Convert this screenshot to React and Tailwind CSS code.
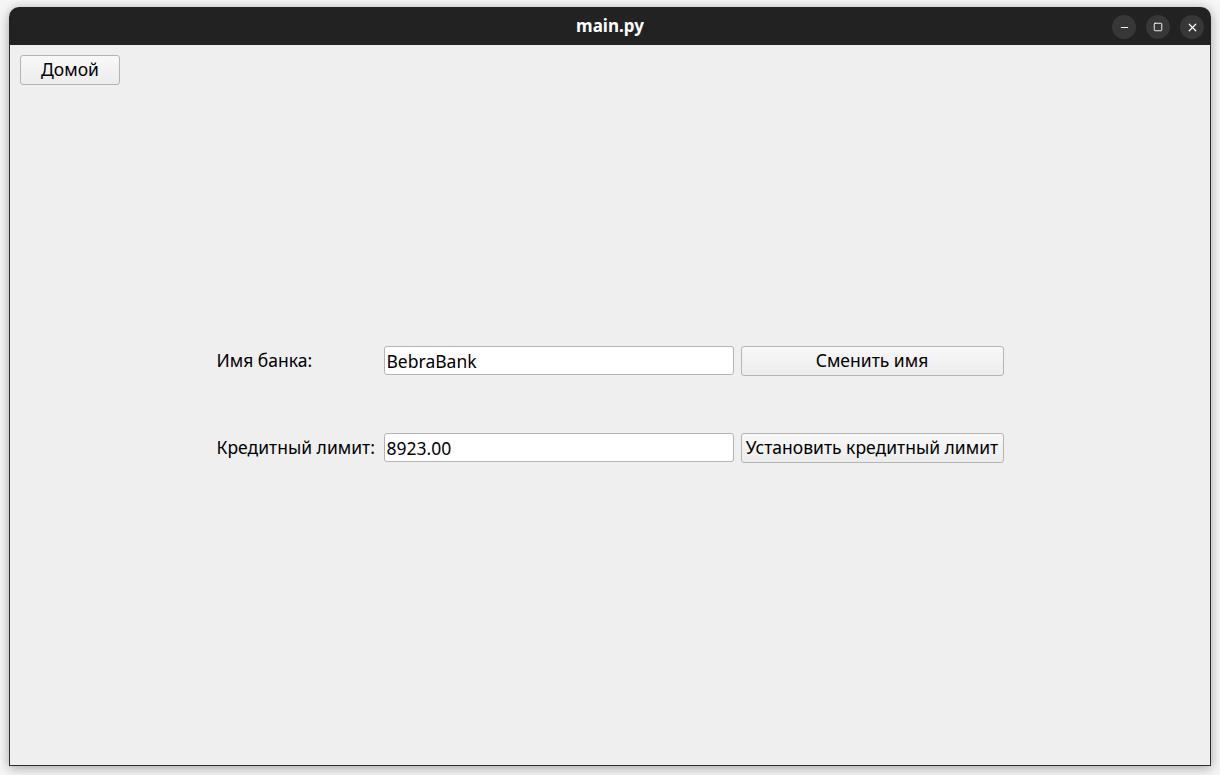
import { Minus, Square, X } from 'lucide-react';

const font = { fontFamily: '"Noto Sans", "DejaVu Sans", sans-serif' };

const WinButton = ({ children }) => (
  <div className="w-6 h-6 rounded-full bg-[#373737] flex items-center justify-center text-white">
    {children}
  </div>
);

const QtButton = ({ children, className = '' }) => (
  <button
    className={`border border-[#b4b4b4] rounded-[3px] bg-gradient-to-b from-[#f8f8f8] to-[#ececec] text-[17.5px] text-black leading-none whitespace-nowrap ${className}`}
  >
    {children}
  </button>
);

const App = () => {
  return (
    <div className="w-[1220px] h-[775px] bg-[#f6f6f6] pt-[7px] px-[9px] pb-[9px]" style={font}>
      <div className="h-full flex flex-col rounded-t-[10px] overflow-hidden shadow-[0_2px_12px_rgba(0,0,0,0.35)]">
        {/* title bar */}
        <div className="h-[38px] bg-[#222222] relative flex items-center justify-center shrink-0">
          <span className="text-white font-bold text-[17px]">main.py</span>
          <div className="absolute right-[7px] top-[8px] flex gap-[10px]">
            <WinButton>
              <Minus size={11} strokeWidth={2.2} />
            </WinButton>
            <WinButton>
              <Square size={10} strokeWidth={2.2} />
            </WinButton>
            <WinButton>
              <X size={13} strokeWidth={2.2} />
            </WinButton>
          </div>
        </div>

        {/* content */}
        <div className="flex-1 flex flex-col bg-[#efefef] border-x border-b border-[#2e2e2e]">
          <div className="pt-[10px] pl-[10px]">
            <QtButton className="w-[100px] h-[30px]">Домой</QtButton>
          </div>
          <div className="flex-1 flex items-center justify-center pb-[42px]">
            <div className="grid grid-cols-[160px_350px_263px] gap-x-[7px] gap-y-[57px] items-center">
              <span className="text-[17.5px] text-black">Имя банка:</span>
              <input
                readOnly
                value="BebraBank"
                className="h-[29px] border border-[#b4b4b4] rounded-[3px] bg-white px-[2px] text-[17.5px] text-black outline-none"
              />
              <QtButton className="h-[30px]">Сменить имя</QtButton>

              <span className="text-[17.5px] text-black whitespace-nowrap">Кредитный лимит:</span>
              <input
                readOnly
                value="8923.00"
                className="h-[29px] border border-[#b4b4b4] rounded-[3px] bg-white px-[2px] text-[17.5px] text-black outline-none"
              />
              <QtButton className="h-[30px]">Установить кредитный лимит</QtButton>
            </div>
          </div>
        </div>
      </div>
    </div>
  );
};

export default App;
